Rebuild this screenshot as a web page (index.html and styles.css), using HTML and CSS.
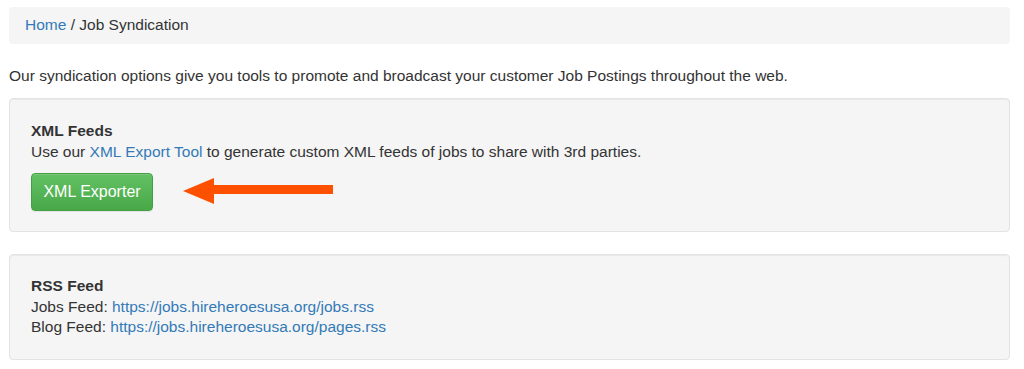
FILE: index.html
```html
<!DOCTYPE html>
<html>
  <head>
    <meta charset="utf-8">
    <title>Job Syndication</title>
    <link rel="stylesheet" href="styles.css">
  </head>
  <body>
    <div class="page">
      <div class="breadcrumb">
        <a href="#">Home</a> / Job Syndication
      </div>

      <p class="intro">Our syndication options give you tools to promote and broadcast your customer Job Postings throughout the web.</p>

      <div class="well">
        <div class="well-title">XML Feeds</div>
        <div>Use our <a href="#">XML Export Tool</a> to generate custom XML feeds of jobs to share with 3rd parties.</div>
        <div class="action-row">
          <button type="button" class="btn-success">XML Exporter</button>
          <svg class="arrow" width="152" height="28" viewBox="0 0 152 28">
            <polygon points="0,13 31,0 31,7 150,7 150,16 31,16 31,26" fill="#ff5000"/>
          </svg>
        </div>
      </div>

      <div class="well well-rss">
        <div class="well-title">RSS Feed</div>
        <div>Jobs Feed: <a href="#">https://jobs.hireheroesusa.org/jobs.rss</a></div>
        <div>Blog Feed: <a href="#">https://jobs.hireheroesusa.org/pages.rss</a></div>
      </div>
    </div>
  </body>
</html>
```

FILE: styles.css
```css
body {
  margin: 0;
  font-family: "Liberation Sans", Arial, Helvetica, sans-serif;
  font-size: 15.5px;
  line-height: 20.5px;
  color: #333;
  background: #fff;
}

a {
  color: #337ab7;
  text-decoration: none;
}

.page {
  padding: 7px 14px 0 9px;
}

.breadcrumb {
  background: #f5f5f5;
  border-radius: 4px;
  padding: 8px 16px;
}

.intro {
  margin: 22px 0 12px;
}

.well {
  background: #f5f5f5;
  border: 1px solid #e3e3e3;
  border-radius: 4px;
  box-shadow: inset 0 1px 1px rgba(0,0,0,0.05);
  padding: 22px 21px 20px;
  margin-bottom: 22px;
}

.well-title {
  font-weight: bold;
}

.action-row {
  display: flex;
  align-items: center;
  gap: 30px;
  margin-top: 11px;
}

.btn-success {
  font-family: "Liberation Sans", Arial, Helvetica, sans-serif;
  font-size: 16px;
  color: #fff;
  background: linear-gradient(to bottom, #63c163 0%, #48a848 100%);
  border: 1px solid #45a045;
  border-radius: 4px;
  padding: 8px 8px;
  line-height: 20px;
  width: 122px;
  box-shadow: inset 0 1px 0 rgba(255,255,255,0.15), 0 1px 1px rgba(0,0,0,0.075);
  cursor: pointer;
}

.arrow {
  display: block;
}

.well-rss {
  padding-top: 21px;
  padding-bottom: 21px;
}
```
